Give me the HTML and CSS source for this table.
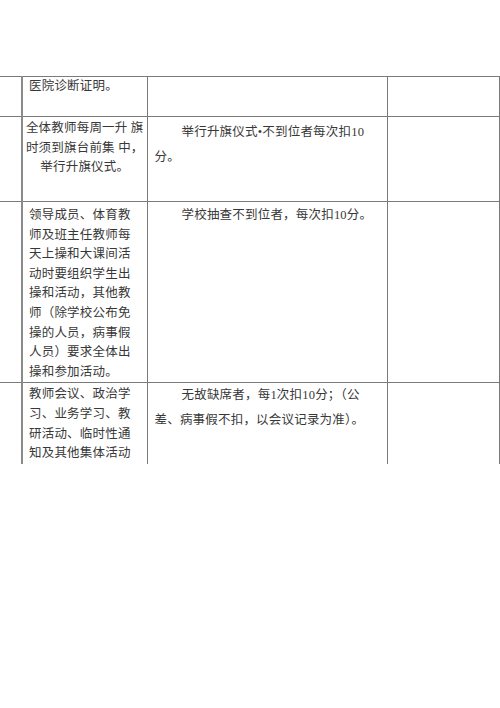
FILE: index.html
```html
<!DOCTYPE html>
<html lang="zh-CN">
<head>
<meta charset="utf-8">
<title>教师考勤</title>
<link rel="stylesheet" href="styles.css">
</head>
<body>
<div class="page">
  <table class="grid">
    <colgroup>
      <col class="c1">
      <col class="c2">
      <col class="c3">
      <col class="c4">
    </colgroup>
    <tr class="r1">
      <td class="edge"></td>
      <td class="item item-r1">医院诊断证明。</td>
      <td class="rule"></td>
      <td class="blank"></td>
    </tr>
    <tr class="r2">
      <td class="edge"></td>
      <td class="item center item-r2">全体教师每周一升 旗<br>时须到旗台前集 中，<br>举行升旗仪式。</td>
      <td class="rule rule-r2">举行升旗仪式•不到位者每次扣10<br>分。</td>
      <td class="blank"></td>
    </tr>
    <tr class="r3">
      <td class="edge"></td>
      <td class="item item-r3">领导成员、体育教<br>师及班主任教师每<br>天上操和大课间活<br>动时要组织学生出<br>操和活动，其他教<br>师（除学校公布免<br>操的人员，病事假<br>人员）要求全体出<br>操和参加活动。</td>
      <td class="rule rule-r3">学校抽查不到位者，每次扣10分。</td>
      <td class="blank"></td>
    </tr>
    <tr class="r4">
      <td class="edge"></td>
      <td class="item item-r4">教师会议、政治学<br>习、业务学习、教<br>研活动、临时性通<br>知及其他集体活动</td>
      <td class="rule rule-r4">无故缺席者，每1次扣10分；（公<br>差、病事假不扣，以会议记录为准）。</td>
      <td class="blank"></td>
    </tr>
  </table>
</div>
</body>
</html>
```

FILE: styles.css
```css
html, body {
  margin: 0;
  padding: 0;
  background: #ffffff;
}

.page {
  width: 500px;
  height: 708px;
  padding-top: 76px;
  box-sizing: border-box;
  overflow: hidden;
}

.grid {
  border-collapse: collapse;
  table-layout: fixed;
  width: 499px;
  font-family: "Liberation Serif", "Noto Sans CJK SC", serif;
  font-size: 12.5px;
  color: #383838;
}

.c1 { width: 22px; }
.c2 { width: 125px; }
.c3 { width: 240px; }
.c4 { width: 112px; }

.grid td {
  border: 1px solid #7a7a7a;
  vertical-align: top;
  padding: 0;
  box-sizing: border-box;
}

.grid td.edge {
  border-left: none;
  border-right: 2px solid #8a8a8a;
}

.r1 td { height: 40px; }
.r2 td { height: 85px; }
.r3 td { height: 180px; }
.r4 td { height: 78px; border-bottom: none; }

.item {
  line-height: 19.6px;
  padding-left: 6px !important;
  padding-right: 3px !important;
  letter-spacing: 0.2px;
}

.item.center {
  text-align: center;
  padding-left: 2px !important;
  padding-right: 2px !important;
}

.item-r1 { padding-top: 0 !important; }
.item-r2 { padding-top: 2px !important; }
.item-r3 { padding-top: 4px !important; }
.item-r4 { padding-top: 2px !important; }

.rule {
  line-height: 25px;
  padding-left: 7px !important;
  text-indent: 27px;
  letter-spacing: 0.2px;
}

.rule-r2 { padding-top: 3px !important; }
.rule-r3 { padding-top: 1px !important; }
.rule-r4 { padding-top: 0 !important; }
```
